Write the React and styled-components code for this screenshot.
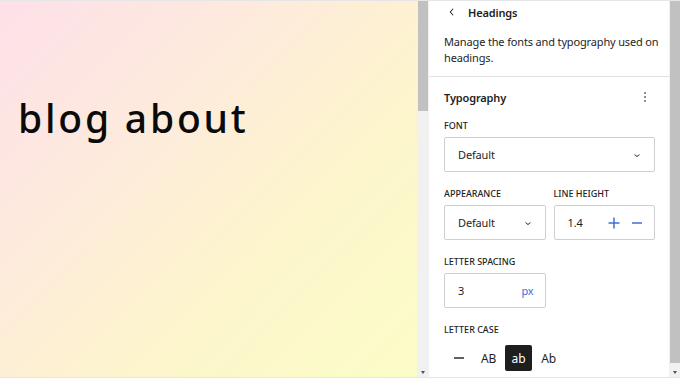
import React from 'react';
import styled, { createGlobalStyle } from 'styled-components';

const GlobalStyle = createGlobalStyle`
  html, body {
    margin: 0;
    padding: 0;
    width: 680px;
    height: 378px;
    overflow: hidden;
    background: #fff;
  }
  body {
    font-family: "Noto Sans", "Open Sans", sans-serif;
    color: #1e1e1e;
  }
`;

const BLUE = '#3d6fd6';

export default function App() {
  return (
    <>
      <GlobalStyle />
      <Frame>
        <Canvas>
          <Title>blog about</Title>
        </Canvas>
        <Scrollbar thumb={110} />
        <Panel>
          <Header>
            <BackButton aria-label="Back">
              <svg width="14" height="14" viewBox="0 0 24 24">
                <path d="M14.6 7l-1.2-1L8 12l5.4 6 1.2-1-4.6-5z" fill="#1e1e1e" />
              </svg>
            </BackButton>
            <HeaderTitle>Headings</HeaderTitle>
          </Header>
          <Description>Manage the fonts and typography used on headings.</Description>
          <Section>
            <SectionHead>
              <SectionTitle>Typography</SectionTitle>
              <svg width="16" height="16" viewBox="0 0 24 24">
                <path d="M13 19h-2v-2h2v2zm0-6h-2v-2h2v2zm0-6h-2V5h2v2z" fill="#1e1e1e" />
              </svg>
            </SectionHead>

            <Field>
              <Label>Font</Label>
              <Control>
                <Value>Default</Value>
                <Chevron />
              </Control>
            </Field>

            <Row>
              <Field>
                <Label>Appearance</Label>
                <Control>
                  <Value>Default</Value>
                  <Chevron />
                </Control>
              </Field>
              <Field>
                <Label>Line height</Label>
                <Control>
                  <Value>1.4</Value>
                  <Steppers>
                    <svg width="14" height="14" viewBox="0 0 14 14">
                      <path d="M7 1.5v11M1.5 7h11" stroke={BLUE} strokeWidth="1.5" />
                    </svg>
                    <svg width="14" height="14" viewBox="0 0 14 14">
                      <path d="M2 7h10" stroke={BLUE} strokeWidth="1.5" />
                    </svg>
                  </Steppers>
                </Control>
              </Field>
            </Row>

            <Row>
              <Field>
                <Label>Letter spacing</Label>
                <Control>
                  <Value>3</Value>
                  <Unit>px</Unit>
                </Control>
              </Field>
              <div />
            </Row>

            <Field>
              <Label>Letter case</Label>
              <CaseGroup>
                <CaseButton>
                  <svg width="12" height="12" viewBox="0 0 12 12">
                    <path d="M1 6h10" stroke="#1e1e1e" strokeWidth="1.4" />
                  </svg>
                </CaseButton>
                <CaseButton>AB</CaseButton>
                <CaseButton active>ab</CaseButton>
                <CaseButton>Ab</CaseButton>
              </CaseGroup>
            </Field>
          </Section>
        </Panel>
        <Scrollbar thumb={362} />
      </Frame>
    </>
  );
}

function Chevron() {
  return (
    <svg width="12" height="12" viewBox="0 0 24 24">
      <path d="M17.5 11.6L12 16l-5.5-4.4.9-1.2L12 14l4.5-3.6 1 1.2z" fill="#1e1e1e" />
    </svg>
  );
}

const Frame = styled.div`
  display: flex;
  width: 680px;
  height: 378px;
  border-top: 1px solid #e6e6e6;
  border-bottom: 1px solid #e6e6e6;
  box-sizing: border-box;
`;

const Canvas = styled.div`
  width: 417px;
  flex-shrink: 0;
  background: linear-gradient(135deg, #fde0e9 0%, #fdebdc 35%, #fdf5cc 65%, #fbfdc8 100%);
  padding: 97px 0 0 18px;
  box-sizing: border-box;
`;

const Title = styled.h1`
  margin: 0;
  font-family: "Noto Sans", "Open Sans", sans-serif;
  font-weight: 500;
  font-size: 39px;
  letter-spacing: 2.8px;
  line-height: 40px;
  color: #0a0a0a;
`;

const Scrollbar = styled.div`
  width: 12px;
  flex-shrink: 0;
  background: #f1f1f1;
  position: relative;

  &::before {
    content: '';
    position: absolute;
    left: 1px;
    right: 1px;
    top: 0;
    height: ${(p) => p.thumb}px;
    background: #c1c1c1;
  }

  &::after {
    content: '';
    position: absolute;
    left: 4px;
    bottom: 3px;
    border-left: 2px solid transparent;
    border-right: 2px solid transparent;
    border-top: 3px solid #505050;
  }
`;

const Panel = styled.div`
  width: 240px;
  flex-shrink: 0;
  background: #fff;
  display: flex;
  flex-direction: column;
  font-size: 11px;
  letter-spacing: -0.15px;
`;

const Header = styled.div`
  display: flex;
  align-items: center;
  gap: 9px;
  height: 22px;
  padding: 0 0 0 16px;
`;

const BackButton = styled.span`
  display: flex;
  width: 14px;
  height: 14px;
`;

const HeaderTitle = styled.span`
  font-weight: 600;
  font-size: 11px;
`;

const Description = styled.p`
  margin: 0;
  padding: 11px 10px 10px 15px;
  font-size: 11px;
  line-height: 16px;
  color: #1e1e1e;
  border-bottom: 1px solid #e0e0e0;
`;

const Section = styled.div`
  padding: 11px 14px 0 15px;
  display: flex;
  flex-direction: column;
  gap: 16px;
`;

const SectionHead = styled.div`
  display: flex;
  justify-content: space-between;
  align-items: center;
  height: 18px;
  margin-right: 2px;
  margin-bottom: -2px;
`;

const SectionTitle = styled.span`
  font-weight: 600;
  font-size: 11px;
`;

const Field = styled.div`
  display: flex;
  flex-direction: column;
  gap: 5px;
`;

const Label = styled.span`
  text-transform: uppercase;
  font-size: 9px;
  font-weight: 500;
  line-height: 12px;
  letter-spacing: 0;
  color: #1e1e1e;
`;

const Row = styled.div`
  display: grid;
  grid-template-columns: 1fr 1fr;
  gap: 8px;
`;

const Control = styled.div`
  display: flex;
  align-items: center;
  justify-content: space-between;
  height: 35px;
  box-sizing: border-box;
  border: 1px solid #cfcfcf;
  border-radius: 2px;
  padding: 0 11px 0 13px;
`;

const Value = styled.span`
  font-size: 11px;
`;

const Unit = styled.span`
  color: ${BLUE};
  font-size: 11px;
`;

const Steppers = styled.div`
  display: flex;
  gap: 9px;
  margin-right: -1px;
`;

const CaseGroup = styled.div`
  display: flex;
  gap: 3px;
  padding-left: 1px;
  margin-top: 4px;
`;

const CaseButton = styled.div`
  width: 27px;
  height: 26px;
  display: flex;
  align-items: center;
  justify-content: center;
  border-radius: 2px;
  font-size: 12px;
  background: ${(p) => (p.active ? '#1e1e1e' : 'transparent')};
  color: ${(p) => (p.active ? '#fff' : '#1e1e1e')};
`;
